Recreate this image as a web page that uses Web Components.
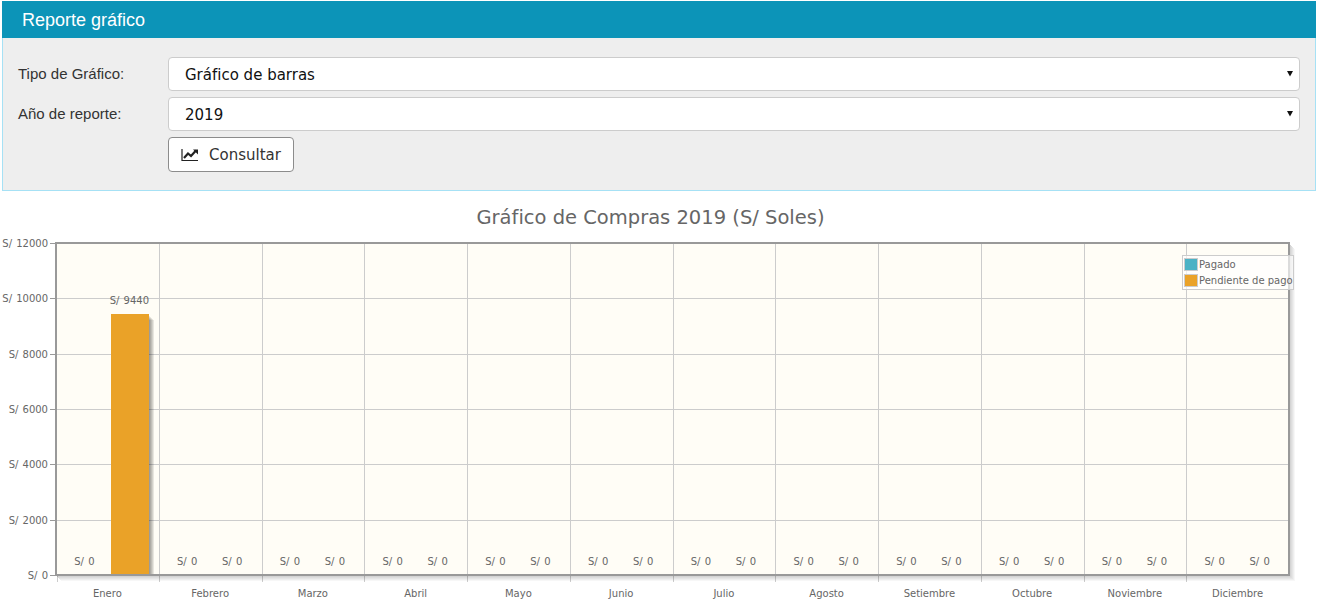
<!DOCTYPE html>
<html lang="es">
<head>
<meta charset="utf-8">
<title>Reporte gráfico</title>
<style>
  html, body { margin: 0; padding: 0; background: #fff; }
  body { font-family: "Liberation Sans", Arial, sans-serif; overflow: hidden; }
</style>
</head>
<body>
<report-panel heading="Reporte gráfico">
  <form-row label="Tipo de Gráfico:"><select-box value="Gráfico de barras"></select-box></form-row>
  <form-row label="Año de reporte:"><select-box value="2019"></select-box></form-row>
  <form-row><query-button>Consultar</query-button></form-row>
</report-panel>
<bar-chart></bar-chart>

<script>
class ReportPanel extends HTMLElement {
  constructor() {
    super();
    this.attachShadow({ mode: "open" });
  }

  connectedCallback() {
    this.shadowRoot.innerHTML = `
      <style>
        :host {
          display: block;
          margin: 1px 2px 0;
          box-sizing: border-box;
          height: 190px;
          border: 1px solid #a6e1f5;
          border-top: 0;
          background: #eeeeee;
        }
        .head {
          height: 37px;
          margin: 0 -1px;
          padding: 0 0 0 20px;
          background: #0c94b8;
          color: #fff;
          font-size: 18px;
          line-height: 38px;
        }
        .body {
          display: flex;
          flex-direction: column;
          gap: 6px;
          padding: 19px 15px 0;
        }
      </style>
      <div class="head">${this.getAttribute("heading") || ""}</div>
      <div class="body"><slot></slot></div>
    `;
  }
}

class FormRow extends HTMLElement {
  constructor() {
    super();
    this.attachShadow({ mode: "open" });
  }

  connectedCallback() {
    this.shadowRoot.innerHTML = `
      <style>
        :host {
          display: grid;
          grid-template-columns: 150px 1fr;
          align-items: center;
          color: #333;
          font-size: 15px;
        }
        .label { padding-bottom: 1px; }
      </style>
      <div class="label">${this.getAttribute("label") || ""}</div>
      <div><slot></slot></div>
    `;
  }
}

class SelectBox extends HTMLElement {
  constructor() {
    super();
    this.attachShadow({ mode: "open" });
  }

  connectedCallback() {
    this.shadowRoot.innerHTML = `
      <style>
        :host {
          display: block;
          position: relative;
          height: 34px;
        }
        select {
          appearance: none;
          display: block;
          box-sizing: border-box;
          width: 100%;
          height: 34px;
          padding: 2px 16px 0;
          border: 1px solid #ccc;
          border-radius: 4px;
          background: #fff;
          color: #111;
          font: 15px "DejaVu Sans", Verdana, sans-serif;
        }
        svg {
          position: absolute;
          right: 7px;
          top: 13px;
        }
      </style>
      <select><option>${this.getAttribute("value") || ""}</option></select>
      <svg width="6" height="7" viewBox="0 0 6 7"><path d="M0 1h6L3 6.5z" fill="#111"/></svg>
    `;
  }
}

class QueryButton extends HTMLElement {
  constructor() {
    super();
    this.attachShadow({ mode: "open" });
  }

  connectedCallback() {
    this.shadowRoot.innerHTML = `
      <style>
        :host { display: block; }
        button {
          display: inline-flex;
          align-items: center;
          gap: 10px;
          box-sizing: border-box;
          height: 35px;
          padding: 0 12px;
          border: 1px solid #8c8c8c;
          border-radius: 4px;
          background: #fff;
          color: #333;
          font: 15px "DejaVu Sans", Verdana, sans-serif;
        }
      </style>
      <button type="button">
        <svg width="18" height="14" viewBox="0 0 18 14">
          <path d="M1 1v11.5h16" fill="none" stroke="#222" stroke-width="1.2"/>
          <path d="M3 10l4-4.5 3 2.5 5-5.5" fill="none" stroke="#222" stroke-width="2.2"/>
          <path d="M12 1.5H17V6.5z" fill="#222"/>
        </svg>
        <slot></slot>
      </button>
    `;
  }
}

class BarChart extends HTMLElement {
  constructor() {
    super();
    this.attachShadow({ mode: "open" });
    this.months = ["Enero", "Febrero", "Marzo", "Abril", "Mayo", "Junio", "Julio", "Agosto", "Setiembre", "Octubre", "Noviembre", "Diciembre"];
    this.values = { pagado: new Array(12).fill(0), pendiente: [9440, 0, 0, 0, 0, 0, 0, 0, 0, 0, 0, 0] };
  }

  connectedCallback() {
    this.render();
  }

  render() {
    const left = 56, right = 1289, top = 243, bottom = 575, max = 12000;
    const cell = (right - left) / 12;
    const y = (v) => bottom - (v / max) * (bottom - top);
    let grid = "";
    let labels = "";

    for (let v = 0; v <= max; v += 2000) {
      const py = Math.round(y(v)) + 0.5;
      if (v > 0 && v < max) {
        grid += `<path d="M${left} ${py}H${right}" stroke="#ccc"/>`;
      }
      grid += `<path d="M${left - 6} ${py}H${left}" stroke="#999"/>`;
      labels += `<text class="val" x="${left - 8}" y="${py + 3}" text-anchor="end">S/ ${v}</text>`;
    }

    this.months.forEach((name, i) => {
      const px = Math.round(left + cell * (i + 1)) + 0.5;
      if (i < 11) grid += `<path d="M${px} ${top}V${bottom}" stroke="#ccc"/>`;
      const tick = Math.round(left + cell * i) + (i ? 0.5 : 1.5);
      grid += `<path d="M${tick} ${bottom}v7" stroke="#ccc"/>`;
      const mid = left + cell * (i + 0.5);
      labels += `<text x="${mid}" y="597" text-anchor="middle">${name}</text>`;
      labels += `<text class="val" x="${mid - 23}" y="565" text-anchor="middle">S/ ${this.values.pagado[i]}</text>`;
      const v = this.values.pendiente[i];
      labels += `<text class="val" x="${mid + 22}" y="${v ? y(v) - 10 : 565}" text-anchor="middle">S/ ${v}</text>`;
    });

    const barX = 111, barW = 38, barY = Math.round(y(9440));
    let shadows = "";
    let barShadows = "";
    [1, 2, 3, 4, 5].forEach((o) => {
      shadows += `<path d="M${right + o + 0.5} ${top + o + 1}V${bottom + o + 0.5}H${left + o}" fill="none" stroke="#000" stroke-opacity="${0.03 + (5 - o) * 0.035}"/>`;
      barShadows += `<rect x="${barX + barW}" y="${barY + o + 1}" width="${o}" height="${bottom - barY - o - 2}" fill="#000" fill-opacity=".09"/>`;
    });

    this.shadowRoot.innerHTML = `
      <style>
        :host { display: block; height: 414px; }
        h2 {
          margin: 0;
          height: 52px;
          padding: 14px 17px 0 0;
          box-sizing: border-box;
          color: #666;
          font: 400 19.5px/26px "DejaVu Sans", Verdana, sans-serif;
          text-align: center;
        }
        svg { display: block; position: absolute; left: 0; top: 191px; }
        text { font: 10px "DejaVu Sans", Verdana, sans-serif; fill: #666; }
        text.val { word-spacing: 1px; }
      </style>
      <h2>Gráfico de Compras 2019 (S/ Soles)</h2>
      <svg width="1318" height="414" viewBox="0 191 1318 414">
        <rect x="${left}" y="${top}" width="${right - left}" height="${bottom - top}" fill="#fffdf6"/>
        <g fill="none">${grid}</g>
        ${shadows}
        <rect x="${left}" y="${top}" width="${right - left}" height="${bottom - top}" fill="none" stroke="#999" stroke-width="2"/>
        ${barShadows}
        <rect x="${barX}" y="${barY}" width="${barW}" height="${bottom - barY - 1}" fill="#eaa228"/>
        ${labels}
        <g class="legend">
          <rect x="1182.5" y="255.5" width="111" height="34" fill="#fff" fill-opacity=".65" stroke="#ccc"/>
          <rect x="1184.5" y="258.5" width="13" height="12" fill="#fff" stroke="#ccc"/>
          <rect x="1185" y="259" width="12" height="11" fill="#4bb2c5"/>
          <rect x="1184.5" y="274.5" width="13" height="12" fill="#fff" stroke="#ccc"/>
          <rect x="1185" y="275" width="12" height="11" fill="#eaa228"/>
          <text x="1199" y="268">Pagado</text>
          <text x="1199" y="284">Pendiente de pago</text>
        </g>
      </svg>
    `;
  }
}

customElements.define("report-panel", ReportPanel);
customElements.define("form-row", FormRow);
customElements.define("select-box", SelectBox);
customElements.define("query-button", QueryButton);
customElements.define("bar-chart", BarChart);
</script>
</body>
</html>
